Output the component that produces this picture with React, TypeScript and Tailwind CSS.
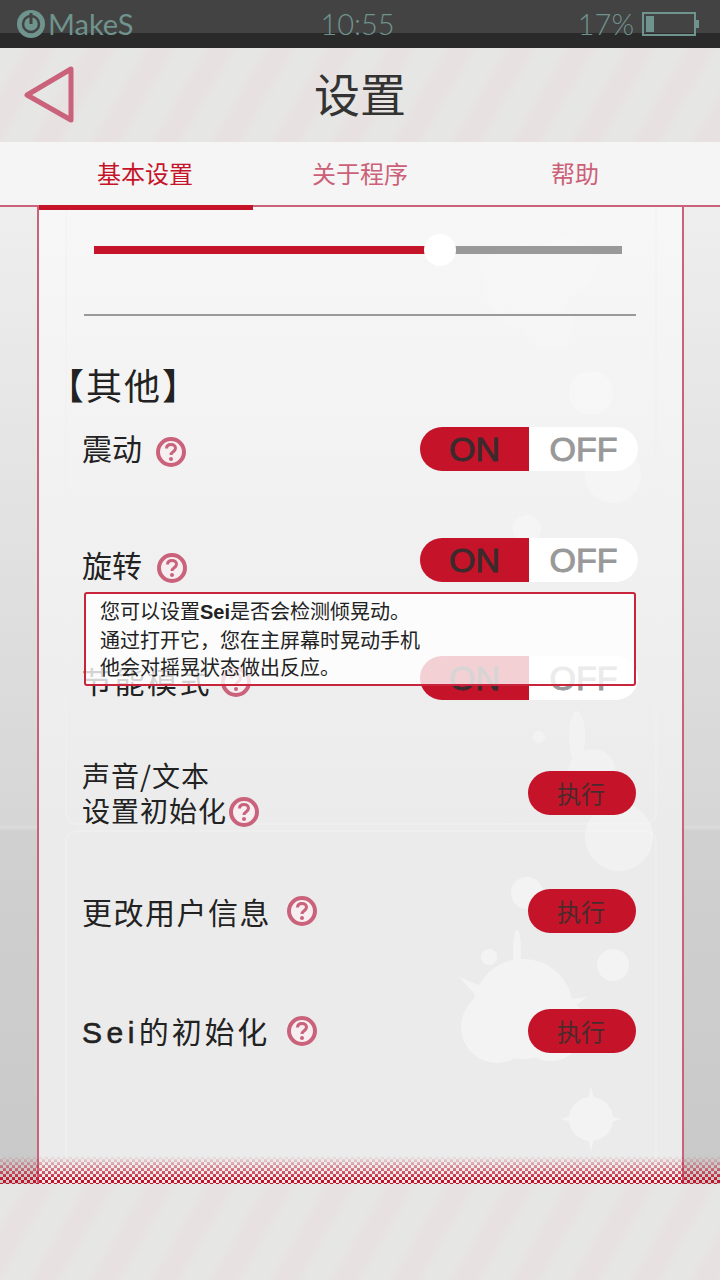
import React from "react";

const stripes =
  "bg-[repeating-linear-gradient(120deg,#e6e6e5_0,#e6e6e5_18px,#e8e1e1_28px,#e8e1e1_42px,#e6e6e5_52px)]";

function Help() {
  return (
    <svg width="32" height="32" viewBox="0 0 32 32" className="shrink-0">
      <circle cx="16" cy="16" r="13" fill="#f6eef0" stroke="#c9627a" strokeWidth="4" />
      <path
        d="M11.5 12.5c0-2.6 2-4 4.5-4s4.5 1.5 4.5 3.8c0 3.4-4.5 3.4-4.5 6.6"
        fill="none"
        stroke="#c9627a"
        strokeWidth="3"
      />
      <circle cx="16" cy="23" r="2" fill="#c9627a" />
    </svg>
  );
}

function Toggle() {
  return (
    <div className="flex h-11 w-[218px] overflow-hidden rounded-full font-['Liberation_Sans',sans-serif] text-[34px] leading-[44px] [-webkit-text-stroke:1px_currentColor]">
      <div className="w-[109px] bg-[#c5142a] text-center text-[#3c2a2c]">ON</div>
      <div className="w-[109px] bg-white text-center text-[#999999]">OFF</div>
    </div>
  );
}

function Run() {
  return (
    <div className="flex h-11 w-[108px] items-center justify-center rounded-full bg-[#c5142a] pr-[2px] text-2xl text-[#4a2a2c]">
      执行
    </div>
  );
}

function Splatter() {
  return (
    <svg
      width="643"
      height="976"
      viewBox="0 0 643 976"
      className="absolute left-0 top-0"
      fill="#ffffff"
    >
      <g opacity="0.14">
        <circle cx="488" cy="80" r="42" />
        <circle cx="525" cy="60" r="30" />
        <circle cx="450" cy="60" r="10" />
        <circle cx="510" cy="120" r="24" />
      </g>
      <g opacity="0.3">
        <circle cx="552" cy="186" r="22" />
        <circle cx="574" cy="268" r="28" />
        <circle cx="488" cy="322" r="14" />
        <circle cx="500" cy="530" r="6" />
        <circle cx="553" cy="566" r="24" />
        <circle cx="580" cy="630" r="34" />
        <ellipse cx="538" cy="530" rx="8" ry="26" />
        <circle cx="520" cy="598" r="4" />
      </g>
      <g opacity="0.42">
        <circle cx="488" cy="686" r="16" />
        <circle cx="450" cy="750" r="8" />
        <circle cx="574" cy="758" r="16" />
        <circle cx="484" cy="802" r="50" />
        <circle cx="458" cy="820" r="36" />
        <circle cx="512" cy="820" r="34" />
        <ellipse cx="478" cy="745" rx="4" ry="22" />
        <path d="M420 770l34 14-10 12zM548 790l-36 4 6 18z" />
        <circle cx="552" cy="912" r="22" />
        <path d="M552 880l5 20h-10zM522 912l20-6v12zM582 912l-20-6v12zM552 944l-5-20h10z" />
      </g>
    </svg>
  );
}

export default function App() {
  return (
    <div className="relative flex h-[1280px] w-[720px] flex-col overflow-hidden bg-[#e6e6e6] font-['Noto_Sans_CJK_SC','Noto_Sans',sans-serif] text-[#222222]">
      {/* status bar */}
      <div className="flex h-12 items-start justify-between bg-[linear-gradient(#434343_33px,#2a2a2a_33px)] pl-4 pr-[21px] pt-[6px] font-['Lato',sans-serif] text-[#6f938d]">
        <div className="flex w-[240px] items-center">
          <svg width="30" height="30" viewBox="0 0 30 30">
            <circle cx="15" cy="15" r="14" fill="#6f938d" />
            <circle cx="15" cy="15" r="8" fill="none" stroke="#434343" strokeWidth="2.5" />
            <rect x="13.5" y="4" width="3" height="11" fill="#434343" />
          </svg>
          <span className="ml-[2px] text-[29px] leading-[36px]">MakeS</span>
        </div>
        <span className="text-[29px] font-light leading-[36px]">10:55</span>
        <div className="flex w-[240px] items-center justify-end">
          <span className="mr-2 text-[29px] font-light leading-[36px]">17%</span>
          <div className="h-[24px] w-[54px] border-2 border-[#6f938d] p-[2px]">
            <div className="h-full w-2 bg-[#6f938d]" />
          </div>
          <div className="h-2 w-[3px] bg-[#6f938d]" />
        </div>
      </div>

      {/* header */}
      <div className={`relative flex h-[94px] items-center justify-center ${stripes}`}>
        <svg width="60" height="64" viewBox="0 0 60 64" className="absolute left-[20px] top-[16px]">
          <path
            d="M7 31L51 5V56Z"
            fill="none"
            stroke="#c9627a"
            strokeWidth="5"
            strokeLinejoin="round"
          />
        </svg>
        <h1 className="pb-[6px] text-[46px] font-normal leading-none text-[#333333]">设置</h1>
      </div>

      {/* tabs */}
      <div className="flex h-[63px] justify-center bg-[#f5f5f5] text-2xl leading-[62px]">
        <div className="relative w-[215px] text-center text-[#c5142a]">
          基本设置
          <div className="absolute -bottom-[5px] left-[1px] z-10 h-[5px] w-[214px] bg-[#c5142a]" />
        </div>
        <div className="w-[215px] text-center text-[#cc6078]">关于程序</div>
        <div className="w-[215px] text-center text-[#cc6078]">帮助</div>
      </div>

      {/* main */}
      <div className="relative flex-1 border-t-2 border-[#c9627a] bg-[linear-gradient(#eeeeee,#d6d6d6_618px,#dcdcdc_620px,#d0d0d0_624px,#c9c9c9)]">
        <div className="relative ml-[37px] mr-[36px] h-full border-x-2 border-[#c9627a] bg-[linear-gradient(#f7f7f7,#ebebeb_65%)]">
          <div className="absolute left-[26px] top-0 h-[618px] w-[592px] rounded-b-xl border-x-2 border-b-2 border-[#f1f1f1]/50" />
          <div className="absolute bottom-0 left-[26px] h-[354px] w-[592px] rounded-t-xl border-x-2 border-t-2 border-[#f1f1f1]/50" />
          <Splatter />

          <div className="relative pt-[27px]">
            {/* slider */}
            <div className="ml-[55px] flex h-8 w-[528px] items-center">
              <div className="h-2 w-[346px] bg-[#c5142a]" />
              <div className="-mx-[16px] z-10 h-8 w-8 rounded-full bg-white" />
              <div className="h-2 flex-1 bg-[#999999]" />
            </div>
            <div className="ml-[45px] mt-[48px] h-0.5 w-[552px] bg-[#999999]" />

            <div className="ml-[9px] mt-[48px] h-10 text-[36px] font-normal leading-10 tracking-[2px]">【其他】</div>

            <div className="mt-[23px] flex h-11 items-center justify-between pl-[43px] pr-[44px]">
              <div className="flex items-center">
                <span className="pb-[5px] text-[30px] leading-10">震动</span>
                <div className="ml-[13px] mt-[6px]">
                  <Help />
                </div>
              </div>
              <Toggle />
            </div>

            <div className="mt-[67px] flex h-11 items-center justify-between pl-[43px] pr-[44px]">
              <div className="mt-[8px] flex items-center">
                <span className="text-[30px] leading-10">旋转</span>
                <div className="ml-[14px] mt-[8px]">
                  <Help />
                </div>
              </div>
              <Toggle />
            </div>

            <div className="mt-[74px] flex h-11 items-center justify-between pl-[43px] pr-[44px]">
              <div className="mt-[4px] flex items-center">
                <span className="text-[30px] leading-10 tracking-[2.5px]">节能模式</span>
                <div className="ml-[8px] mt-[4px]">
                  <Help />
                </div>
              </div>
              <Toggle />
            </div>

            <div className="mt-[71px] flex h-11 items-center justify-between pl-[43px] pr-[46px]">
              <div className="text-[28px] leading-[35px] tracking-[1px]">
                <div>声音/文本</div>
                <div className="flex items-center">
                  设置初始化
                  <div className="ml-[1px] mt-[2px]">
                    <Help />
                  </div>
                </div>
              </div>
              <Run />
            </div>

            <div className="mt-[74px] flex h-11 items-center justify-between pl-[43px] pr-[46px]">
              <div className="flex items-center">
                <span className="text-[30px] leading-10 tracking-[1.5px]">更改用户信息</span>
                <div className="ml-[15px]">
                  <Help />
                </div>
              </div>
              <Run />
            </div>

            <div className="mt-[76px] flex h-11 items-center justify-between pl-[43px] pr-[46px]">
              <div className="flex items-center">
                <span className="text-[30px] leading-10 tracking-[2.8px]">
                  <span className="font-['Liberation_Sans',sans-serif] tracking-[4.5px] [-webkit-text-stroke:0.6px_currentColor]">Sei</span>的初始化
                </span>
                <div className="ml-[16px]">
                  <Help />
                </div>
              </div>
              <Run />
            </div>
          </div>

          {/* tooltip */}
          <div className="absolute left-[45px] top-[385px] h-[94px] w-[552px] rounded-[3px] border-2 border-[#c8243c] bg-white/80 pl-[14px] pt-[3px] text-xl leading-[27px]">
            <div>
              您可以设置<span className="font-['Liberation_Sans',sans-serif] font-bold">Sei</span>是否会检测倾晃动。
            </div>
            <div>通过打开它，您在主屏幕时晃动手机</div>
            <div>他会对摇晃状态做出反应。</div>
          </div>
        </div>

        {/* halftone edge */}
        <div className="absolute bottom-0 left-0 h-[28px] w-full bg-[repeating-conic-gradient(#c4142b_0_25%,transparent_0_50%)] bg-[length:6px_6px] [mask-image:linear-gradient(transparent,#000_85%)]" />
      </div>

      {/* footer */}
      <div className={`h-[96px] ${stripes}`} />
    </div>
  );
}
